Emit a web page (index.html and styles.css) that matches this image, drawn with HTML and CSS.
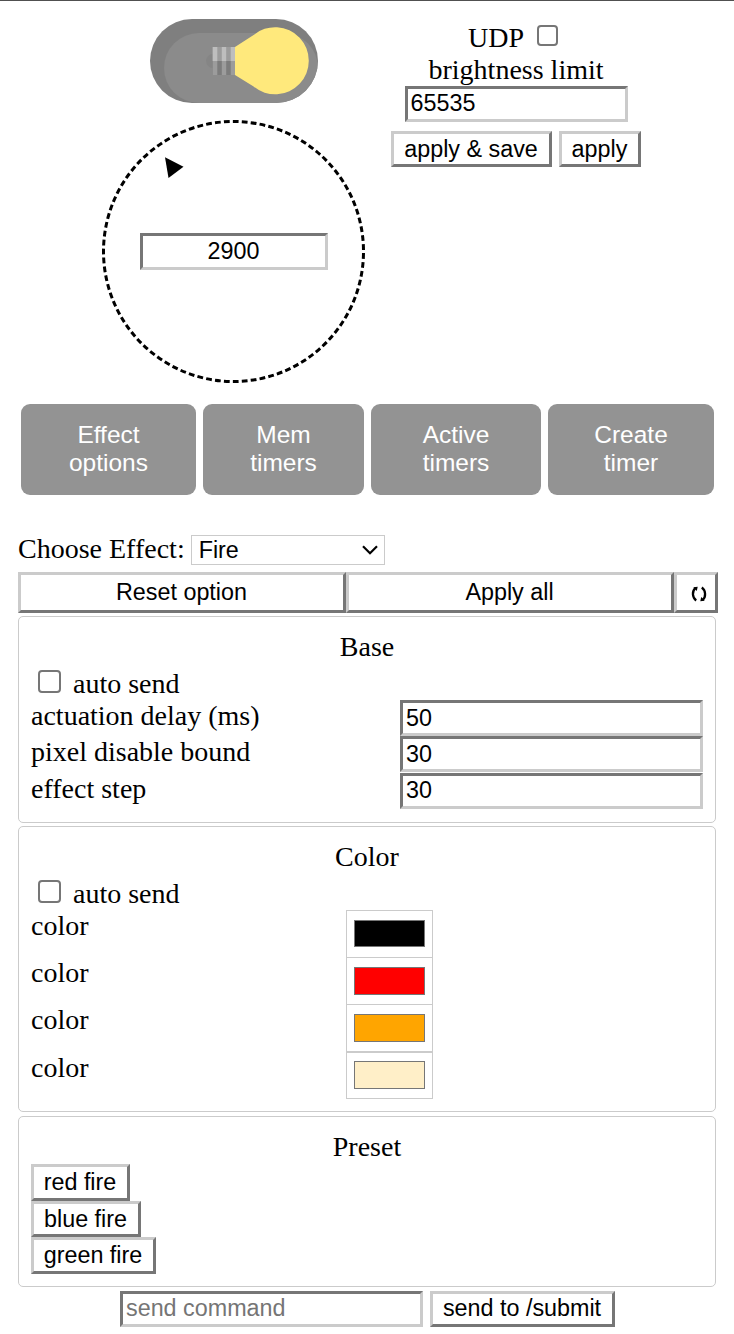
FILE: index.html
```html
<!DOCTYPE html>
<html lang="en">
<head>
<meta charset="utf-8">
<title>Lamp control</title>
<link rel="stylesheet" href="styles.css">
</head>
<body>
<div class="page">
  <header class="top">
    <div class="lamp">
      <svg class="toggle" width="168" height="84" viewBox="0 0 168 84" role="img" aria-label="Lamp on">
        <defs><clipPath id="pill"><rect width="168" height="84" rx="42"/></clipPath></defs>
        <rect width="168" height="84" rx="42" fill="#7f7f7f"/>
        <g clip-path="url(#pill)">
          <rect x="14" y="14" width="154" height="70" rx="35" fill="#8b8b8b"/>
          <circle cx="63" cy="42" r="7" fill="#858585"/>
        </g>
        <rect x="62.7" y="28" width="22.3" height="14" fill="#9c9c9c"/>
        <rect x="62.7" y="42" width="22.3" height="14" fill="#7c7c7c"/>
        <path d="M62.7 28h4.6v14h-4.6zM71.8 28h4.4v14h-4.4zM80.7 28h4.3v14h-4.3z" fill="#bebebe"/>
        <path d="M62.7 42h4.6v14h-4.6zM71.8 42h4.4v14h-4.4zM80.7 42h4.3v14h-4.3z" fill="#9c9c9c"/>
        <path d="M85 28L103.600 16A33.600 33.600 0 1 1 103.600 67.500L85 56z" fill="#ffe97c"/>
      </svg>
      <div class="dial">
        <svg class="ring" width="263" height="263" viewBox="0 0 263 263"><circle cx="131.5" cy="131.5" r="130" fill="none" stroke="#000" stroke-width="3" pathLength="819" stroke-dasharray="5.8 3.2" stroke-dashoffset="2.9" transform="rotate(180 131.5 131.5)"/></svg>
        <svg class="pointer" width="20" height="22" viewBox="0 0 20 22"><path d="M0 .3L18.500 9.700L3.500 21z"/></svg>
        <input class="field dial-value" value="2900">
      </div>
    </div>
    <div class="limits">
      <label class="udp">UDP <input class="check" type="checkbox"></label>
      <div class="caption">brightness limit</div>
      <input class="field limit" value="65535">
      <div class="actions">
        <button class="btn save">apply &amp; save</button>
        <button class="btn apply">apply</button>
      </div>
    </div>
  </header>

  <nav class="tabs">
    <button class="tab">Effect<br>options</button>
    <button class="tab">Mem<br>timers</button>
    <button class="tab">Active<br>timers</button>
    <button class="tab">Create<br>timer</button>
  </nav>

  <div class="choose">
    <span>Choose Effect:</span>
    <div class="select"><span>Fire</span>
      <svg width="16" height="10" viewBox="0 0 16 10"><path d="M1 1.200L8 8.200L15 1.200" fill="none" stroke="#000" stroke-width="2.200"/></svg>
    </div>
  </div>
  <div class="bar">
    <button class="btn">Reset option</button>
    <button class="btn">Apply all</button>
    <button class="btn" aria-label="Reload">
      <svg class="reload" width="16" height="16" viewBox="0 0 16 16"><path d="M5.200 14.500C1 11.500 1 5 4.200 2.300M10.800 1.500C15 4.500 15 11 11.800 13.700" fill="none" stroke="#000" stroke-width="2.300"/><path d="M2.300 1.300L6.700 .8L5.800 5zM13.700 14.700L9.300 15.200L10.200 11z"/></svg>
    </button>
  </div>

  <section class="panel base">
    <h2 class="title">Base</h2>
    <label class="auto"><input class="check" type="checkbox">auto send</label>
    <div class="row"><span>actuation delay (ms)</span><input class="field" value="50"></div>
    <div class="row"><span>pixel disable bound</span><input class="field" value="30"></div>
    <div class="row"><span>effect step</span><input class="field" value="30"></div>
  </section>

  <section class="panel colors">
    <h2 class="title">Color</h2>
    <label class="auto"><input class="check" type="checkbox">auto send</label>
    <div class="color-row"><span>color</span><div class="well"><div class="swatch black"></div></div></div>
    <div class="color-row"><span>color</span><div class="well"><div class="swatch red"></div></div></div>
    <div class="color-row"><span>color</span><div class="well"><div class="swatch orange"></div></div></div>
    <div class="color-row"><span>color</span><div class="well last"><div class="swatch cream"></div></div></div>
  </section>

  <section class="panel preset">
    <h2 class="title">Preset</h2>
    <button class="btn p-red">red fire</button>
    <button class="btn p-blue">blue fire</button>
    <button class="btn p-green">green fire</button>
  </section>

  <footer class="command">
    <input class="field" placeholder="send command">
    <button class="btn">send to /submit</button>
  </footer>
</div>
</body>
</html>
```
FILE: styles.css
```css
* { box-sizing: border-box; }
body {
  margin: 0;
  background: #fff;
  color: #000;
  font: 28px/32px "Liberation Serif", "Times New Roman", serif;
}
.page {
  width: 734px;
  height: 1334px;
  overflow: hidden;
  border-top: 1px solid #505050;
  padding: 18px 16px 0 18px;
}
.field, .btn {
  display: block;
  margin: 0;
  height: 36px;
  border: 3px solid;
  border-radius: 0;
  background: #fff;
  color: #000;
  font: 23.333px/26px "Liberation Sans", Arial, sans-serif;
  outline: none;
}
.field { border-color: #767676 #cbcbcb #cbcbcb #767676; padding: 0 3px 2px; }
.field::placeholder { color: #757575; opacity: 1; }
.btn { border-color: #cbcbcb #767676 #767676 #cbcbcb; padding: 0 1px 0 0; white-space: nowrap; }
.check {
  appearance: none;
  margin: 0;
  width: 23px;
  height: 23px;
  border: 2px solid #767676;
  border-radius: 4px;
  background: #fff;
}

.top { display: flex; height: 385px; }
.lamp { display: flex; flex-direction: column; align-items: center; width: 263px; margin-left: 84px; }
.toggle { display: block; margin-left: 1px; }
.dial {
  position: relative;
  width: 263px;
  height: 263px;
  margin-top: 17px;
  padding: 113px 0 0 38px;
}
.ring { position: absolute; left: 0; top: 0; }
.pointer { position: absolute; left: 63px; top: 37px; }
.dial-value { width: 188px; height: 37px; padding: 0 4px 0 3px; text-align: center; }
.limits { display: flex; flex-direction: column; align-items: center; width: 250px; margin-left: 26px; padding-top: 3px; }
.udp { display: flex; gap: 13px; margin-right: 6px; }
.udp .check { width: 21px; height: 21px; margin-top: 3px; }
.limit { width: 223px; }
.actions { display: flex; gap: 7px; margin-top: 9px; }
.save { width: 161px; }
.apply { width: 82px; }

.tabs { display: grid; grid-template-columns: 175px 161px 170px 166px; gap: 7px; margin-left: 3px; }
.tab {
  height: 91px;
  border: 0;
  border-radius: 9px;
  background: #939393;
  color: #fff;
  padding: 0 0 2px;
  font: 24.500px/28px "Liberation Sans", Arial, sans-serif;
}

.choose { display: flex; gap: 6px; margin-top: 38px; height: 32px; }
.select {
  display: flex;
  justify-content: space-between;
  align-items: center;
  width: 194px;
  height: 30px;
  margin-top: 2px;
  padding: 0 6px 0 7px;
  border: 1px solid #cbcbcb;
  font: 23.333px/26px "Liberation Sans", Arial, sans-serif;
}
.bar { display: grid; grid-template-columns: 328px 328px 44px; margin-top: 7px; }
.bar .btn { height: 41px; padding-bottom: 2px; }
.reload { display: block; margin: 4px 0 0 14px; }

.panel { width: 698px; border: 1px solid #cbcbcb; border-radius: 5px; padding: 14px 12px 0; }
.base { height: 207px; margin-top: 3px; }
.colors { height: 286px; margin-top: 3px; }
.preset { height: 171px; margin-top: 4px; }
.title { margin: 0; font-size: 28px; font-weight: 400; text-align: center; }
.auto { display: flex; gap: 12px; height: 37px; padding: 5px 0 0 7px; }
.auto .check { margin-top: 2px; }
.row { display: flex; justify-content: space-between; height: 36.400px; }
.row .field { width: 303px; padding-bottom: 0; }
.color-row { display: flex; justify-content: space-between; height: 47.200px; }
.well { width: 87px; height: 48px; margin-right: 270px; padding: 9px 7px; border: 1px solid #cbcbcb; }
.last { height: 47px; padding-top: 8px; }
.swatch { height: 28px; border: 1px solid #767676; }
.black { height: 27px; background: #000; }
.red { background: #f00; }
.orange { background: #ffa500; }
.cream { background: #ffefc8; }
.preset .title { margin-bottom: 1px; }
.preset .btn { height: 36.500px; }
.p-red { width: 99px; }
.p-blue { width: 110px; }
.p-green { width: 125px; }
.command { display: flex; gap: 7px; margin: 4px 0 0 102px; }
.command .field { width: 303px; }
.command .btn { width: 185px; padding-bottom: 2px; }
```
